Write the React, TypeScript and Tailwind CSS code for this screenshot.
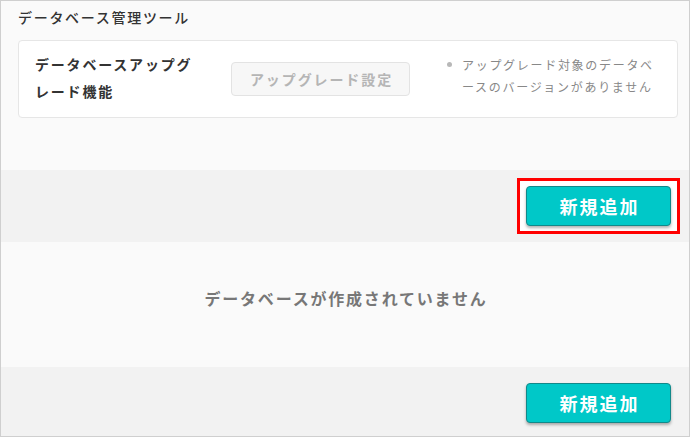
export default function App() {
  const font = { fontFamily: '"Noto Sans CJK JP", "Noto Sans", sans-serif' };

  return (
    <div
      className="flex h-[437px] w-[690px] flex-col border border-[#cfcfcf] bg-[#fafafa] text-[#333]"
      style={font}
    >
      {/* database tools */}
      <section className="h-[169px] bg-[#fafafa] pl-[17px] pr-[11px] pt-[5px]">
        <h2 className="text-[14px] leading-[22px] font-medium tracking-[1.7px] text-[#333]">データベース管理ツール</h2>
        <div className="mt-[12px] flex h-[78px] items-start rounded-[4px] border border-[#e6e6e6] bg-white pl-[16px] pt-[10px]">
          <div className="w-[170px] text-[14px] font-bold leading-[27px] tracking-[1.8px] text-[#333]">
            データベースアップグレード機能
          </div>
          <button
            type="button"
            disabled
            className="ml-[26px] mt-[11px] h-[34px] w-[179px] rounded-[4px] border border-[#e3e3e3] bg-[#f7f7f7] pl-[2px] text-[14px] font-bold tracking-[1.9px] text-[#b5b5b5]"
          >
            アップグレード設定
          </button>
          <div className="ml-[37px] mt-[3px] flex">
            <span className="mr-[10px] mt-[8px] h-[5px] w-[5px] rounded-full bg-[#b8b8b8]" />
            <p className="w-[200px] text-[12px] leading-[22px] tracking-[1.7px] text-[#888]">
              アップグレード対象のデータベースのバージョンがありません
            </p>
          </div>
        </div>
      </section>

      {/* action bar */}
      <div className="flex h-[72px] items-center justify-end bg-[#f2f2f2] pr-[9px]">
        <div className="border-[3px] border-[#ff0000] bg-white px-[6px] py-[5px]">
          <button
            type="button"
            className="h-[40px] w-[145px] rounded-[4px] border border-[#12898a] bg-[#00c8c8] pl-[2px] text-[18px] font-bold tracking-[2px] text-white shadow-[0_2px_3px_rgba(0,0,0,0.3)]"
          >
            新規追加
          </button>
        </div>
      </div>

      {/* empty state */}
      <div className="flex h-[125px] items-center justify-center bg-[#fafafa]">
        <p className="pb-[14px] pl-[2px] text-[16px] font-bold tracking-[1.8px] text-[#777]">データベースが作成されていません</p>
      </div>

      {/* bottom bar */}
      <div className="flex flex-1 items-start justify-end bg-[#f2f2f2] pr-[18px] pt-[16px]">
        <button
          type="button"
          className="h-[40px] w-[145px] rounded-[4px] border border-[#12898a] bg-[#00c8c8] pl-[2px] text-[18px] font-bold tracking-[2px] text-white shadow-[0_2px_3px_rgba(0,0,0,0.3)]"
        >
          新規追加
        </button>
      </div>
    </div>
  );
}
